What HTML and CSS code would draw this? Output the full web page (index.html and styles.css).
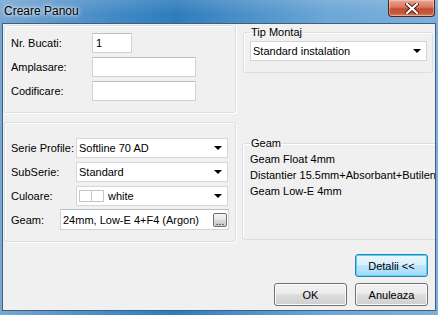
FILE: index.html
```html
<!DOCTYPE html>
<html lang="ro">
<head>
  <meta charset="UTF-8">
  <title>Creare Panou</title>
  <link rel="stylesheet" href="styles.css">
</head>
<body>

  <div class="window">
    <div class="titlebar">
      <span class="title">Creare Panou</span>
      <button class="close">
        <svg width="14" height="11" viewBox="0 0 14 11">
          <path d="M2 1 L12 10 M12 1 L2 10" stroke="#4a1a12" stroke-width="4" stroke-linecap="square"/>
          <path d="M2 1 L12 10 M12 1 L2 10" stroke="#ffffff" stroke-width="2.2" stroke-linecap="square"/>
        </svg>
      </button>
    </div>

    <div class="client">
      <div class="top">

        <div class="left">
          <!-- date panou -->
          <div class="panel panel-info">
            <div class="row">
              <span class="lbl lbl-info">Nr. Bucati:</span>
              <div class="textbox tb-short">1</div>
            </div>
            <div class="row">
              <span class="lbl lbl-info">Amplasare:</span>
              <div class="textbox tb-long"></div>
            </div>
            <div class="row">
              <span class="lbl lbl-info">Codificare:</span>
              <div class="textbox tb-long"></div>
            </div>
          </div>

          <!-- profil / geam -->
          <div class="panel panel-profile">
            <div class="row">
              <span class="lbl lbl-combo">Serie Profile:</span>
              <div class="combo combo-left"><span class="combo-text">Softline 70 AD</span><span class="arrow"></span></div>
            </div>
            <div class="row">
              <span class="lbl lbl-combo">SubSerie:</span>
              <div class="combo combo-left"><span class="combo-text">Standard</span><span class="arrow"></span></div>
            </div>
            <div class="row">
              <span class="lbl lbl-combo">Culoare:</span>
              <div class="combo combo-left">
                <span class="swatch"></span><span class="swatch"></span>
                <span class="combo-text swatch-text">white</span><span class="arrow"></span>
              </div>
            </div>
            <div class="row row-geam">
              <span class="lbl lbl-geam">Geam:</span>
              <div class="textbox tb-geam">
                <span class="geam-text">24mm, Low-E 4+F4 (Argon)</span>
                <button class="dots">...</button>
              </div>
            </div>
          </div>
        </div>

        <div class="right">
          <fieldset class="group group-montaj">
            <legend>Tip Montaj</legend>
            <div class="combo combo-montaj"><span class="combo-text">Standard instalation</span><span class="arrow"></span></div>
          </fieldset>

          <fieldset class="group group-geam">
            <legend>Geam</legend>
            <div class="item">Geam Float 4mm</div>
            <div class="item">Distantier 15.5mm+Absorbant+Butilena</div>
            <div class="item">Geam Low-E 4mm</div>
          </fieldset>
        </div>

      </div>

      <div class="actions">
        <div class="actions-row">
          <button class="btn btn-focus">Detalii &lt;&lt;</button>
        </div>
        <div class="actions-row">
          <button class="btn">OK</button>
          <button class="btn">Anuleaza</button>
        </div>
      </div>
    </div>
  </div>

</body>
</html>
```

FILE: styles.css
```css
body {
  margin: 0;
  padding: 0;
  font-family: 'Liberation Sans', Arial, sans-serif;
  font-size: 11px;
  color: #000;
  overflow: hidden;
}

.window {
  width: 438px;
  height: 315px;
  display: flex;
  flex-direction: column;
  background: linear-gradient(to right, #79a8d2 0%, #5e98cb 12%, #3f88c4 28%, #2f7cbc 40%, #4b8fc8 55%, #6da7d6 75%, #7bb0db 100%);
}

/* title bar */

.titlebar {
  height: 23px;
  display: flex;
  align-items: flex-start;
  justify-content: space-between;
  background: linear-gradient(to bottom, rgba(255,255,255,0.12), rgba(255,255,255,0) 60%);
}

.title {
  margin: 4px 0 0 4px;
  font-size: 12px;
  line-height: 14px;
  text-shadow: 0 0 6px #fff, 0 0 3px #fff;
}

.close {
  width: 47px;
  height: 17px;
  margin: 0 3px 0 0;
  padding: 0;
  display: flex;
  align-items: center;
  justify-content: center;
  border: 1px solid #5a2018;
  border-top: none;
  border-radius: 0 0 4px 4px;
  background: linear-gradient(to bottom, #e9a593 0%, #d97763 45%, #c64a30 55%, #c85a3c 85%, #d98a6c 100%);
  box-shadow: inset 0 0 0 1px rgba(255,255,255,0.35);
}

/* client area */

.client {
  flex: 1;
  margin: 0 2px 4px 2px;
  padding: 1px 0 0 1px;
  border: 1px solid #3e5f7e;
  background: #f0f0f0;
  display: flex;
  flex-direction: column;
}

.top {
  display: flex;
}

.left {
  width: 232px;
  display: flex;
  flex-direction: column;
  gap: 9px;
}

.panel {
  box-sizing: border-box;
  border: 1px solid #d5dfe5;
  border-radius: 3px;
  box-shadow: inset 1px 1px 0 #fff, 1px 1px 0 #fff;
  display: flex;
  flex-direction: column;
  padding-left: 6px;
}

.panel-info {
  height: 88px;
  padding-top: 7px;
  gap: 4px;
}

.panel-profile {
  height: 120px;
  padding-top: 15px;
  gap: 4px;
}

.row {
  display: flex;
  align-items: center;
  height: 20px;
}

.row-geam {
  height: 21px;
  margin-top: -1px;
}

.lbl {
  flex: none;
}

.lbl-info { width: 81px; }
.lbl-combo { width: 65px; }
.lbl-geam { width: 49px; }

.textbox {
  box-sizing: border-box;
  height: 20px;
  border: 1px solid #cfd3d8;
  border-top-color: #b9bec4;
  background: #fff;
  padding: 0 3px;
  line-height: 18px;
}

.tb-short { width: 40px; }
.tb-long { width: 104px; }

.tb-geam {
  width: 169px;
  height: 21px;
  display: flex;
  align-items: center;
  justify-content: space-between;
  padding: 0 1px 0 2px;
}

.dots {
  width: 14px;
  height: 14px;
  padding: 0;
  font-family: inherit;
  font-size: 10px;
  line-height: 16px;
  border: 1px solid #707070;
  border-radius: 2px;
  background: linear-gradient(to bottom, #f4f4f4, #e6e6e6 50%, #d8d8d8 51%, #cdcdcd);
}

.combo {
  box-sizing: border-box;
  height: 20px;
  border: 1px solid #d2d5d9;
  background: #fff;
  display: flex;
  align-items: center;
  padding: 0 5px 0 2px;
}

.combo-left { width: 152px; }

.combo-text {
  flex: 1;
  white-space: nowrap;
}

.arrow {
  width: 0;
  height: 0;
  border-left: 4px solid transparent;
  border-right: 4px solid transparent;
  border-top: 4px solid #000;
}

.swatch {
  width: 11px;
  height: 10px;
  border: 1px solid #c6c6c6;
  background: #fff;
  flex: none;
}

.swatch + .swatch {
  border-left: none;
  width: 11px;
}

.swatch-text {
  margin-left: 4px;
}

/* right column */

.right {
  flex: 1;
  padding-left: 7px;
  overflow: hidden;
  display: flex;
  flex-direction: column;
}

.group {
  box-sizing: border-box;
  margin: 0;
  border: 1px solid #d5dfe5;
  border-radius: 3px;
  box-shadow: inset 1px 1px 0 #fff;
}

.group legend {
  padding: 0 1px;
  line-height: 13px;
}

.group-montaj {
  width: 190px;
  margin-top: 1px;
  padding: 2px 5px 11px 6px;
}

.combo-montaj {
  width: 100%;
}

.group-geam {
  width: 210px;
  height: 103px;
  margin-top: 64px;
  margin-left: -1px;
  padding: 1px 0 0 7px;
}

.item {
  line-height: 16px;
  white-space: nowrap;
}

/* buttons */

.actions {
  display: flex;
  flex-direction: column;
  align-items: flex-end;
  gap: 6px;
  padding: 12px 7px 0 0;
}

.actions-row {
  display: flex;
  gap: 8px;
}

.btn {
  width: 73px;
  height: 23px;
  padding: 0;
  font-family: inherit;
  font-size: 11px;
  color: #000;
  border: 1px solid #707070;
  border-radius: 3px;
  background: linear-gradient(to bottom, #f2f2f2 0%, #ebebeb 49%, #dddddd 50%, #cfcfcf 100%);
  box-shadow: inset 0 0 0 1px #fcfcfc;
}

.btn-focus {
  border-color: #3c7fb1;
  background: linear-gradient(to bottom, #eaf6fd 0%, #d9f0fc 49%, #bee6fd 50%, #a7d9f5 100%);
  box-shadow: inset 0 0 0 1px #48d8fb;
}
```
